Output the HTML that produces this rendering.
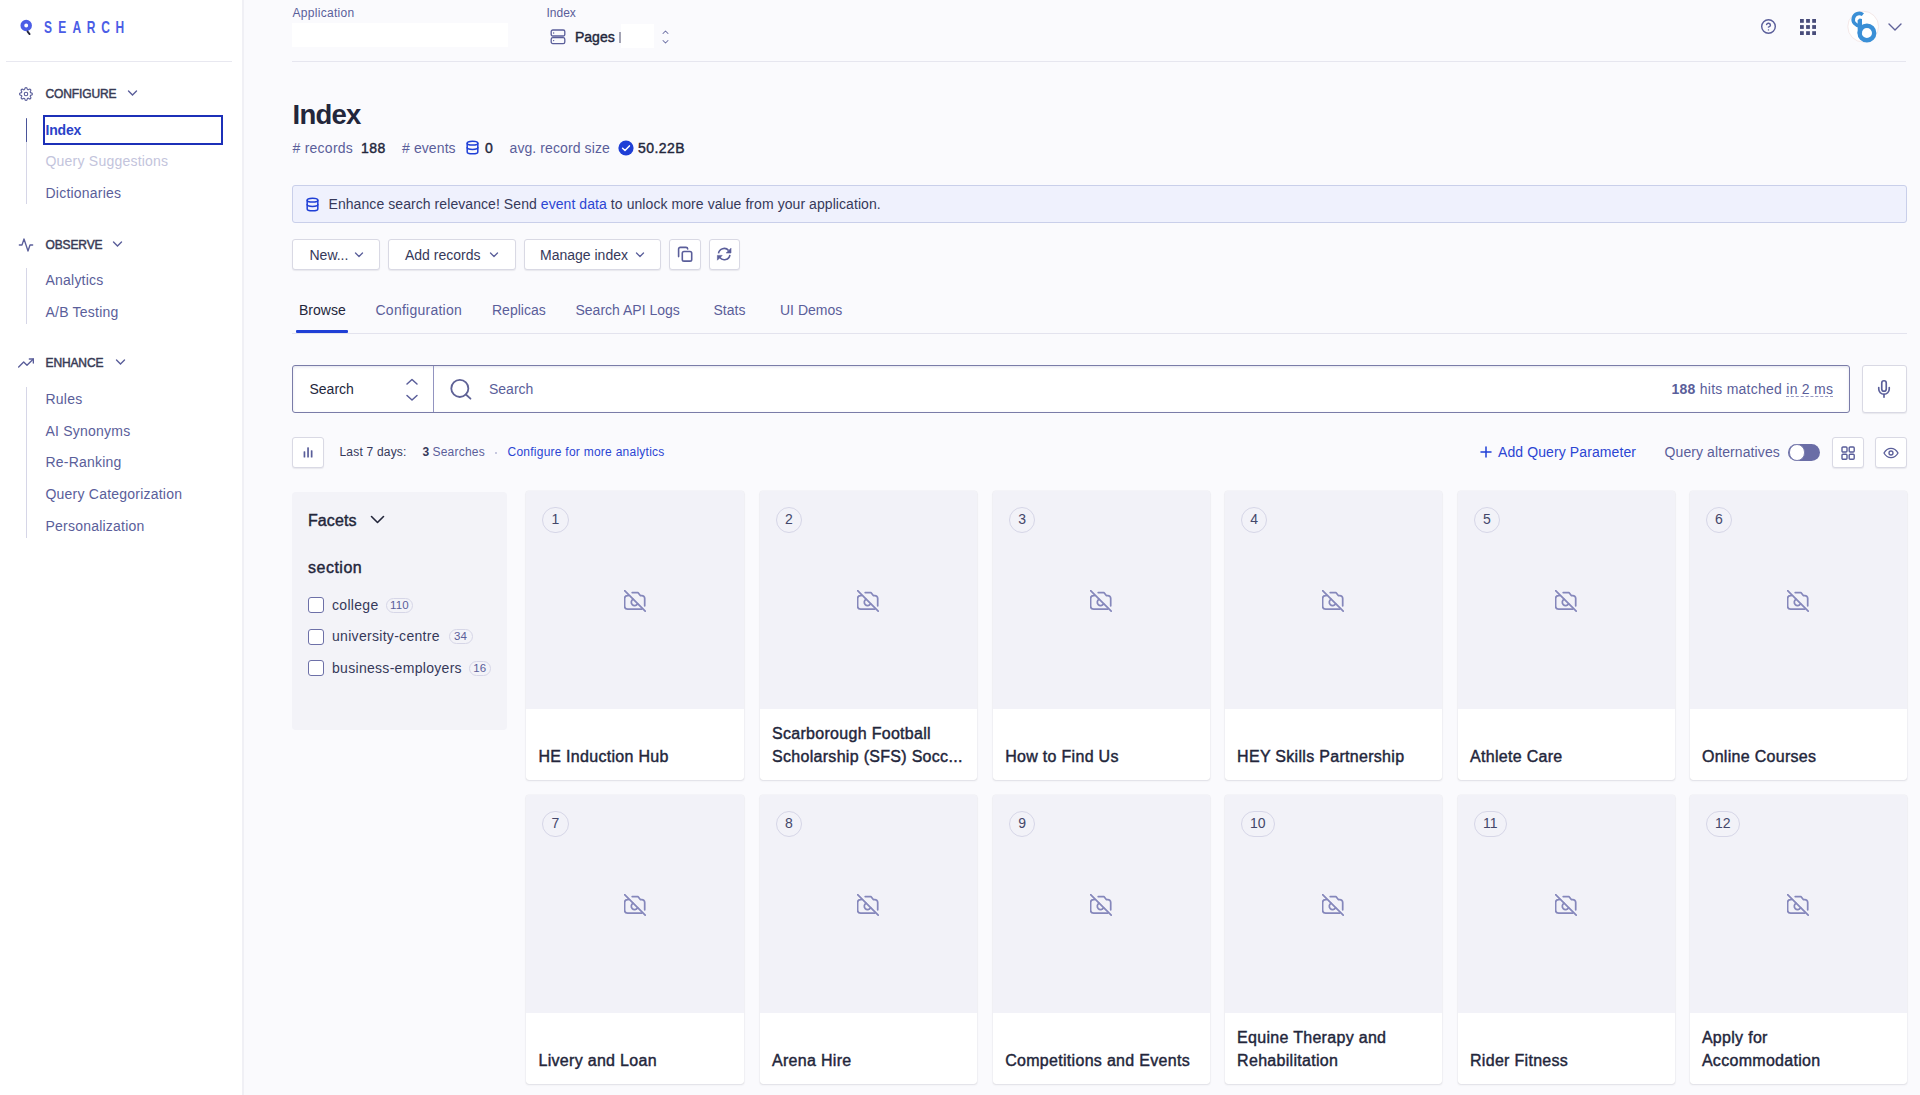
<!DOCTYPE html>
<html><head><meta charset="utf-8">
<style>
*{box-sizing:border-box;margin:0;padding:0}
html,body{width:1920px;height:1095px;overflow:hidden}
body{font-family:"Liberation Sans",sans-serif;background:#fafafd;color:#23263b;position:relative;font-size:14px}
.abs{position:absolute}
svg{display:block}
.t{position:absolute;white-space:nowrap;line-height:1}
/* sidebar */
#side{position:absolute;left:0;top:0;width:244px;height:1095px;background:#fff;border-right:2px solid #f0f0f5}
.sec{position:absolute;left:45.5px;margin-top:-1px;font-size:12px;color:#383b55;letter-spacing:-0.12px;-webkit-text-stroke:0.45px #383b55}
.nav{position:absolute;left:45.5px;font-size:14px;color:#5a5e9a;white-space:nowrap;line-height:1;letter-spacing:0.22px;margin-top:-1.3px}
.vline{position:absolute;left:26px;width:1px;background:#d6d6e7}
/* main */
.lbl{color:#5a5e9a}
.btn{position:absolute;top:239.3px;height:30.4px;background:#fff;border:1px solid #d9d9e4;border-radius:3px;box-shadow:0 1px 1px rgba(35,38,59,.08)}
.btn span{position:absolute;top:7.6px;font-size:14px;color:#36395a;line-height:1;white-space:nowrap}
.tab{position:absolute;top:303px;font-size:14px;color:#5a5e9a;line-height:1;white-space:nowrap}
.card{position:absolute;width:217.6px;height:289px;background:#fff;border-radius:3px;box-shadow:0 0 1px rgba(35,38,59,.22),0 1px 2px rgba(35,38,59,.10);overflow:hidden}
.card .img{position:absolute;left:0;top:0;right:0;height:217.5px;background:#f2f2f8}
.card .num{position:absolute;left:16.2px;top:16.3px;height:25.5px;min-width:26.3px;padding:0 8.2px;border:1px solid #d6d6e7;border-radius:13px;font-size:14px;color:#44476a;line-height:23px;text-align:center}
.card .cam{position:absolute;left:97.6px;top:99px}
.card .ttl{position:absolute;left:12.4px;right:8px;bottom:11.5px;font-size:16px;color:#23263b;line-height:23.5px;letter-spacing:0.3px;-webkit-text-stroke:0.42px #23263b}
.fct{position:absolute;left:332px;font-size:14px;color:#36395a;line-height:1;white-space:nowrap;letter-spacing:0.3px;margin-top:-0.6px}
.cb{position:absolute;left:308px;width:16px;height:16px;border:1px solid #6d70a8;border-radius:3px;background:#fff}
.badge{position:absolute;height:15px;border:1px solid #d6d6e7;border-radius:8px;font-size:11.5px;color:#5a5e9a;line-height:13px;text-align:center;letter-spacing:0.2px}
.ibtn{position:absolute;background:#fff;border:1px solid #d9d9e4;border-radius:3px;box-shadow:0 1px 1px rgba(35,38,59,.08)}
</style></head><body>

<!-- SIDEBAR -->
<div id="side">
  <!-- logo -->
  <svg class="abs" style="left:19px;top:19px" width="16" height="17" viewBox="0 0 16 17">
    <circle cx="7.2" cy="6.5" r="3.85" fill="none" stroke="#4b5de6" stroke-width="3.8"/>
    <path d="M8.6 12.6 L10.6 15.1" stroke="#23263b" stroke-width="1.9" stroke-linecap="round"/>
  </svg>
  <svg class="abs" style="left:40px;top:16px" width="100" height="22" viewBox="0 0 100 22">
    <g transform="scale(0.74,1)" fill="#4b5de6" font-family="Liberation Sans" font-weight="bold" font-size="16.2">
      <text x="5.4" y="17.2">S</text>
      <text x="24.6" y="17.2">E</text>
      <text x="43.8" y="17.2">A</text>
      <text x="63.2" y="17.2">R</text>
      <text x="82.8" y="17.2">C</text>
      <text x="102" y="17.2">H</text>
    </g>
  </svg>
  <div class="abs" style="left:6px;top:61px;width:226px;height:1px;background:#e8e8f0"></div>

  <!-- CONFIGURE -->
  <svg class="abs" style="left:19px;top:87px" width="14" height="14" viewBox="0 0 24 24" fill="none" stroke="#5a5e9a" stroke-width="1.9" stroke-linecap="round" stroke-linejoin="round"><circle cx="12" cy="12" r="3"/><path d="M19.4 15a1.65 1.65 0 0 0 .33 1.82l.06.06a2 2 0 0 1 0 2.83 2 2 0 0 1-2.83 0l-.06-.06a1.65 1.65 0 0 0-1.82-.33 1.65 1.65 0 0 0-1 1.51V21a2 2 0 0 1-2 2 2 2 0 0 1-2-2v-.09A1.65 1.65 0 0 0 9 19.4a1.65 1.65 0 0 0-1.82.33l-.06.06a2 2 0 0 1-2.83 0 2 2 0 0 1 0-2.830l.06-.06a1.65 1.65 0 0 0 .33-1.82 1.65 1.65 0 0 0-1.51-1H3a2 2 0 0 1-2-2 2 2 0 0 1 2-2h.09A1.65 1.65 0 0 0 4.6 9a1.65 1.65 0 0 0-.33-1.82l-.06-.06a2 2 0 0 1 0-2.83 2 2 0 0 1 2.83 0l.06.06a1.650 1.65 0 0 0 1.82.33H9a1.65 1.65 0 0 0 1-1.51V3a2 2 0 0 1 2-2 2 2 0 0 1 2 2v.09a1.65 1.65 0 0 0 1 1.51 1.65 1.65 0 0 0 1.82-.33l.06-.06a2 2 0 0 1 2.83 0 2 2 0 0 1 0 2.83l-.06.06a1.65 1.65 0 0 0-.33 1.82V9a1.65 1.65 0 0 0 1.51 1H21a2 2 0 0 1 2 2 2 2 0 0 1-2 2h-.09a1.65 1.65 0 0 0-1.51 1z"/></svg>
  <div class="t sec" style="top:88.5px">CONFIGURE</div>
  <svg class="abs" style="left:127px;top:89px" width="11" height="8" viewBox="0 0 11 8"><path d="M1.5 2 L5.5 6 L9.5 2" fill="none" stroke="#5a5e9a" stroke-width="1.4" stroke-linecap="round"/></svg>
  <div class="vline" style="top:118px;height:86px"></div>
  <div class="abs" style="left:26px;top:118px;width:1.4px;height:24px;background:#4a5499;border-radius:1px"></div>
  <div class="abs" style="left:43px;top:115px;width:180px;height:30px;border:2px solid #1c30b8"></div>
  <div class="nav" style="top:124.5px;color:#2a42c8;font-weight:bold;letter-spacing:-0.2px">Index</div>
  <div class="nav" style="top:155.5px;color:#c3c4dc">Query Suggestions</div>
  <div class="nav" style="top:187px">Dictionaries</div>

  <!-- OBSERVE -->
  <svg class="abs" style="left:18px;top:237px" width="16" height="16" viewBox="0 0 24 24" fill="none" stroke="#5a5e9a" stroke-width="2" stroke-linecap="round" stroke-linejoin="round"><polyline points="22 12 18 12 15 21 9 3 6 12 2 12"/></svg>
  <div class="t sec" style="top:239.5px">OBSERVE</div>
  <svg class="abs" style="left:112px;top:240px" width="11" height="8" viewBox="0 0 11 8"><path d="M1.5 2 L5.5 6 L9.5 2" fill="none" stroke="#5a5e9a" stroke-width="1.4" stroke-linecap="round"/></svg>
  <div class="vline" style="top:268px;height:56px"></div>
  <div class="nav" style="top:274px">Analytics</div>
  <div class="nav" style="top:306px">A/B Testing</div>

  <!-- ENHANCE -->
  <svg class="abs" style="left:18px;top:355px" width="16" height="16" viewBox="0 0 24 24" fill="none" stroke="#5a5e9a" stroke-width="2" stroke-linecap="round" stroke-linejoin="round"><polyline points="23 6 13.5 15.5 8.5 10.5 1 18"/><polyline points="17 6 23 6 23 12"/></svg>
  <div class="t sec" style="top:357.5px">ENHANCE</div>
  <svg class="abs" style="left:115px;top:358px" width="11" height="8" viewBox="0 0 11 8"><path d="M1.5 2 L5.5 6 L9.5 2" fill="none" stroke="#5a5e9a" stroke-width="1.4" stroke-linecap="round"/></svg>
  <div class="vline" style="top:387px;height:151px"></div>
  <div class="nav" style="top:393px">Rules</div>
  <div class="nav" style="top:425px">AI Synonyms</div>
  <div class="nav" style="top:456px">Re-Ranking</div>
  <div class="nav" style="top:488px">Query Categorization</div>
  <div class="nav" style="top:520px">Personalization</div>
</div>

<!-- MAIN -->
<!-- TOPBAR -->
<div class="t lbl" style="left:292.5px;top:7px;font-size:12px;letter-spacing:0.3px">Application</div>
<div class="abs" style="left:292px;top:23px;width:215.5px;height:24px;background:#fff"></div>
<div class="t lbl" style="left:546.5px;top:7px;font-size:12px">Index</div>
<svg class="abs" style="left:550px;top:29px" width="16" height="16" viewBox="0 0 16 16" fill="none" stroke="#5a5e9a" stroke-width="1.3"><rect x="1.2" y="1" width="13.6" height="6" rx="1.6"/><rect x="1.2" y="8.6" width="13.6" height="6" rx="1.6"/><path d="M3.6 4h.1M3.6 11.6h.1" stroke-linecap="round"/></svg>
<div class="t" style="left:575px;top:30px;font-size:14px;color:#23263b;letter-spacing:0px;-webkit-text-stroke:0.4px #23263b">Pages</div>
<div class="abs" style="left:619.3px;top:32px;width:1.6px;height:10.5px;background:#a3a3b3"></div>
<div class="abs" style="left:620.5px;top:24px;width:33px;height:23.5px;background:#fff"></div>
<svg class="abs" style="left:660px;top:29px" width="11" height="16" viewBox="0 0 11 16" fill="none" stroke="#6f72a6" stroke-width="1.05" stroke-linecap="round" stroke-linejoin="round"><path d="M3 4.5 L5.5 2 L8 4.5"/><path d="M3 11.5 L5.5 14 L8 11.5"/></svg>
<div class="abs" style="left:292px;top:61px;width:1614px;height:1px;background:#e6e6ef"></div>

<!-- right icons -->
<svg class="abs" style="left:1760px;top:18px" width="17" height="17" viewBox="0 0 24 24" fill="none" stroke="#5a5e9a" stroke-width="2" stroke-linecap="round" stroke-linejoin="round"><circle cx="12" cy="12" r="9.6"/><path d="M9.3 9.2a2.8 2.8 0 0 1 5.4.9c0 1.9-2.8 2.7-2.8 2.7"/><path d="M12 16.8h.01"/></svg>
<svg class="abs" style="left:1800px;top:18.5px" width="16" height="16" viewBox="0 0 16 16" fill="#484c7a"><rect x="0" y="0" width="3.8" height="3.8"/><rect x="6.1" y="0" width="3.8" height="3.8"/><rect x="12.2" y="0" width="3.8" height="3.8"/><rect x="0" y="6.1" width="3.8" height="3.8"/><rect x="6.1" y="6.1" width="3.8" height="3.8"/><rect x="12.2" y="6.1" width="3.8" height="3.8"/><rect x="0" y="12.2" width="3.8" height="3.8"/><rect x="6.1" y="12.2" width="3.8" height="3.8"/><rect x="12.2" y="12.2" width="3.8" height="3.8"/></svg>
<svg class="abs" style="left:1846px;top:9px" width="36" height="36" viewBox="0 0 36 36">
  <circle cx="17.2" cy="17.6" r="15.4" fill="#fff" stroke="#efdede" stroke-width="0.7"/>
  <path d="M16.9 5.6 A6.1 6.1 0 1 0 13.9 16.6" fill="none" stroke="#3a8fd6" stroke-width="3.6"/>
  <path d="M11.6 11.2 L13.6 9.6 L16 10 L16.1 24.5 L11.7 24.5 Z" fill="#3a8fd6"/>
  <circle cx="20.9" cy="24" r="7.3" fill="none" stroke="#3a8fd6" stroke-width="4.4"/>
</svg>
<svg class="abs" style="left:1887px;top:21px" width="16" height="12" viewBox="0 0 16 12"><path d="M2 3 L8 9 L14 3" fill="none" stroke="#5f6299" stroke-width="1.4" stroke-linecap="round" stroke-linejoin="round"/></svg>

<!-- TITLE -->
<div class="t" style="left:292.5px;top:101.2px;font-size:27.5px;font-weight:bold;color:#23263b;letter-spacing:-0.75px">Index</div>
<div class="t lbl" style="left:292.5px;top:140.7px;letter-spacing:0.25px">#&nbsp;records</div>
<div class="t" style="left:361px;top:140.7px;color:#23263b;letter-spacing:0.5px;-webkit-text-stroke:0.4px #23263b">188</div>
<div class="t lbl" style="left:402px;top:140.7px;letter-spacing:0.1px">#&nbsp;events</div>
<svg class="abs" style="left:464.5px;top:139.5px" width="15" height="15" viewBox="0 0 24 24" fill="none" stroke="#1f3fd6" stroke-width="2.4" stroke-linecap="round" stroke-linejoin="round"><ellipse cx="12" cy="5" rx="8.5" ry="3"/><path d="M20.5 12c0 1.66-3.8 3-8.5 3s-8.5-1.34-8.5-3"/><path d="M3.5 5v14c0 1.66 3.8 3 8.5 3s8.5-1.34 8.5-3V5"/></svg>
<div class="t" style="left:485px;top:140.7px;color:#23263b;-webkit-text-stroke:0.4px #23263b">0</div>
<div class="t lbl" style="left:509.5px;top:140.7px;letter-spacing:0.1px">avg. record size</div>
<svg class="abs" style="left:617.5px;top:139.5px" width="16" height="16" viewBox="0 0 16 16"><circle cx="8" cy="8" r="7.6" fill="#1f3fd6"/><path d="M4.6 8.2 L7 10.5 L11.4 5.9" fill="none" stroke="#fff" stroke-width="1.5" stroke-linecap="round" stroke-linejoin="round"/></svg>
<div class="t" style="left:638px;top:140.7px;color:#23263b;letter-spacing:0.45px;-webkit-text-stroke:0.4px #23263b">50.22B</div>

<!-- BANNER -->
<div class="abs" style="left:292px;top:185px;width:1615px;height:37.5px;background:#eff1fd;border:1px solid #c9cfea;border-radius:3px"></div>
<svg class="abs" style="left:305px;top:196.5px" width="15" height="15" viewBox="0 0 24 24" fill="none" stroke="#1f3fd6" stroke-width="2.4" stroke-linecap="round" stroke-linejoin="round"><ellipse cx="12" cy="5" rx="8.5" ry="3"/><path d="M20.5 12c0 1.66-3.8 3-8.5 3s-8.5-1.34-8.5-3"/><path d="M3.5 5v14c0 1.66 3.8 3 8.5 3s8.5-1.34 8.5-3V5"/></svg>
<div class="t" style="left:328.5px;top:197.2px;color:#36395a;letter-spacing:0.07px">Enhance search relevance! Send <span style="color:#2b45d3">event data</span> to unlock more value from your application.</div>

<!-- BUTTONS -->
<div class="btn" style="left:292px;width:87.5px"><span style="left:16.5px">New...</span></div>
<svg class="abs" style="left:354px;top:251px" width="10" height="8" viewBox="0 0 10 8"><path d="M1.5 2 L5 5.5 L8.5 2" fill="none" stroke="#5a5e9a" stroke-width="1.3" stroke-linecap="round" stroke-linejoin="round"/></svg>
<div class="btn" style="left:388px;width:127.5px"><span style="left:16px">Add records</span></div>
<svg class="abs" style="left:489px;top:251px" width="10" height="8" viewBox="0 0 10 8"><path d="M1.5 2 L5 5.5 L8.5 2" fill="none" stroke="#5a5e9a" stroke-width="1.3" stroke-linecap="round" stroke-linejoin="round"/></svg>
<div class="btn" style="left:524px;width:136.5px"><span style="left:15px">Manage index</span></div>
<svg class="abs" style="left:634.5px;top:251px" width="10" height="8" viewBox="0 0 10 8"><path d="M1.5 2 L5 5.5 L8.5 2" fill="none" stroke="#5a5e9a" stroke-width="1.3" stroke-linecap="round" stroke-linejoin="round"/></svg>
<div class="btn" style="left:669px;width:32px"></div>
<svg class="abs" style="left:675px;top:244px" width="20" height="20" viewBox="0 0 20 20" fill="none" stroke="#5a5e9a" stroke-width="1.6" stroke-linejoin="round" stroke-linecap="round"><rect x="7.3" y="7.5" width="9.4" height="9.6" rx="1.7"/><path d="M3.6 12.6V5.1A1.7 1.7 0 0 1 5.3 3.4H11a1.7 1.7 0 0 1 1.7 1.6"/></svg>
<div class="btn" style="left:709px;width:31px"></div>
<svg class="abs" style="left:716px;top:246px" width="16" height="16" viewBox="0 0 16 16" fill="none" stroke="#5a5e9a" stroke-width="1.6"><path d="M2.5 7.4A5.7 5.7 0 0 1 12.6 4.6"/><path d="M13.9 8.8A5.7 5.7 0 0 1 3.8 11.6"/><path d="M15 2.2V7H10.2Z" fill="#5a5e9a" stroke-width="0.6" stroke-linejoin="round"/><path d="M1.4 14.2V9.4H6.2Z" fill="#5a5e9a" stroke-width="0.6" stroke-linejoin="round"/></svg>

<!-- TABS -->
<div class="tab" style="left:299px;color:#23263b">Browse</div>
<div class="tab" style="left:375.5px;letter-spacing:0.25px">Configuration</div>
<div class="tab" style="left:492px">Replicas</div>
<div class="tab" style="left:575.5px">Search API Logs</div>
<div class="tab" style="left:713.5px">Stats</div>
<div class="tab" style="left:780px">UI Demos</div>
<div class="abs" style="left:292px;top:332.5px;width:1615px;height:1px;background:#e3e3ee"></div>
<div class="abs" style="left:296px;top:329.5px;width:52px;height:3.5px;background:#1f3fd6;border-radius:1px"></div>

<!-- SEARCH BAR -->
<div class="abs" style="left:292px;top:365px;width:1558px;height:47.5px;background:#fff;border:1px solid #7a7ca8;border-radius:3px;box-shadow:inset 0 1px 3px rgba(119,122,175,.22)"></div>
<div class="abs" style="left:432.6px;top:366px;width:1.6px;height:45.5px;background:#9294c0"></div>
<div class="t" style="left:309.5px;top:382.2px;color:#23263b">Search</div>
<svg class="abs" style="left:404px;top:377px" width="16" height="26" viewBox="0 0 16 26" fill="none" stroke="#5a5e9a" stroke-width="1.5" stroke-linecap="round" stroke-linejoin="round"><path d="M3 7 L8 2.5 L13 7"/><path d="M3 18.5 L8 23 L13 18.5"/></svg>
<svg class="abs" style="left:449px;top:378px" width="23" height="23" viewBox="0 0 24 24" fill="none" stroke="#5f6296" stroke-width="1.9" stroke-linecap="round" stroke-linejoin="round"><circle cx="11.3" cy="10.9" r="8.9"/><line x1="22.4" y1="21.6" x2="17.6" y2="17.2"/></svg>
<div class="t lbl" style="left:489px;top:382.2px">Search</div>
<div class="t lbl" style="left:1671.5px;top:381.4px;letter-spacing:0.25px;line-height:1.15"><b>188</b> hits matched <span style="text-decoration:underline dashed #9698c3;text-underline-offset:1.5px;text-decoration-thickness:1px">in 2 ms</span></div>
<div class="ibtn" style="left:1862px;top:365px;width:45px;height:47.5px"></div>
<svg class="abs" style="left:1875px;top:379px" width="18" height="20" viewBox="0 0 24 24" fill="none" stroke="#5a5e9a" stroke-width="2.2" stroke-linecap="round" stroke-linejoin="round"><path d="M12 1a3 3 0 0 0-3 3v8a3 3 0 0 0 6 0V4a3 3 0 0 0-3-3z"/><path d="M19 10v2a7 7 0 0 1-14 0v-2"/><line x1="12" y1="19" x2="12" y2="23"/></svg>

<!-- ANALYTICS ROW -->
<div class="ibtn" style="left:292px;top:437px;width:31.5px;height:30.5px"></div>
<svg class="abs" style="left:300px;top:444px" width="16" height="16" viewBox="0 0 16 16" fill="#5a5e9a"><rect x="3.6" y="7.2" width="1.7" height="6.3" rx=".6"/><rect x="7.2" y="3.2" width="1.7" height="10.3" rx=".6"/><rect x="10.8" y="6.2" width="1.7" height="7.3" rx=".6"/></svg>
<div class="t" style="left:339.5px;top:446px;font-size:12px;color:#36395a;letter-spacing:0.2px">Last 7 days:</div>
<div class="t" style="left:422.5px;top:446px;font-size:12px;color:#36395a"><b>3</b> <span style="color:#5a5e9a;letter-spacing:0.2px">Searches</span></div>
<div class="abs" style="left:495px;top:451.5px;width:2.2px;height:2.2px;border-radius:50%;background:#b6b7d5"></div>
<div class="t" style="left:507.5px;top:446px;font-size:12px;color:#2b45d3;letter-spacing:0.25px">Configure for more analytics</div>

<svg class="abs" style="left:1479px;top:444.5px" width="14" height="14" viewBox="0 0 14 14"><path d="M7 2v10M2 7h10" stroke="#1f3fd6" stroke-width="1.5" stroke-linecap="round"/></svg>
<div class="t" style="left:1498px;top:445px;color:#2b45d3;letter-spacing:0.1px">Add Query Parameter</div>
<div class="t lbl" style="left:1664.5px;top:445px;letter-spacing:0.1px">Query alternatives</div>
<div class="abs" style="left:1788px;top:443.5px;width:32px;height:17.5px;border-radius:9px;background:#6a6da6"></div>
<div class="abs" style="left:1788.5px;top:444px;width:16.5px;height:16.5px;border-radius:50%;background:#fff;border:1px solid #7d80b0"></div>
<div class="ibtn" style="left:1832px;top:437px;width:31.5px;height:30.5px"></div>
<svg class="abs" style="left:1840px;top:444.5px" width="16" height="16" viewBox="0 0 16 16" fill="none" stroke="#5a5e9a" stroke-width="1.4"><rect x="2" y="2" width="5" height="5" rx="1"/><rect x="9.2" y="2" width="5" height="5" rx="1"/><rect x="2" y="9.2" width="5" height="5" rx="1"/><rect x="9.2" y="9.2" width="5" height="5" rx="1"/></svg>
<div class="ibtn" style="left:1875px;top:437px;width:31.5px;height:30.5px"></div>
<svg class="abs" style="left:1882.5px;top:444.5px" width="16" height="16" viewBox="0 0 24 24" fill="none" stroke="#5a5e9a" stroke-width="2" stroke-linecap="round" stroke-linejoin="round"><path d="M1.5 12S5.5 5 12 5s10.5 7 10.5 7-4 7-10.5 7S1.5 12 1.5 12z"/><circle cx="12" cy="12" r="3"/></svg>

<!-- FACETS -->
<div class="abs" style="left:292px;top:491.5px;width:214.5px;height:238px;background:#f3f3f8;border-radius:4px"></div>
<div class="t" style="left:308px;top:512.5px;font-size:16px;color:#23263b;letter-spacing:0.1px;-webkit-text-stroke:0.42px #23263b">Facets</div>
<svg class="abs" style="left:368.5px;top:513px" width="17" height="13" viewBox="0 0 17 13"><path d="M2.5 3.5 L8.5 9.5 L14.5 3.5" fill="none" stroke="#23263b" stroke-width="1.6" stroke-linecap="round" stroke-linejoin="round"/></svg>
<div class="t" style="left:308px;top:559.5px;font-size:16px;color:#23263b;letter-spacing:0.5px;-webkit-text-stroke:0.42px #23263b">section</div>
<div class="cb" style="top:597px"></div>
<div class="fct" style="top:598.5px">college</div>
<div class="badge" style="left:386px;top:597.5px;width:27px">110</div>
<div class="cb" style="top:628.5px"></div>
<div class="fct" style="top:630px">university-centre</div>
<div class="badge" style="left:448.5px;top:629px;width:24px">34</div>
<div class="cb" style="top:660px"></div>
<div class="fct" style="top:661.5px">business-employers</div>
<div class="badge" style="left:468.5px;top:660.5px;width:22.5px">16</div>

<div class="card" style="left:526.1px;top:491px"><div class="img"></div><div class="num">1</div><svg class="cam" width="22" height="22" viewBox="0 0 22 22" fill="none" stroke="#8587bb" stroke-width="1.75" stroke-linecap="round" stroke-linejoin="round"><path d="M0.6 0.6 L21.2 21.2"/><path d="M4.3 5.6 H3.6 A3 3 0 0 0 0.6 8.6 V16.2 A3 3 0 0 0 3.6 19.2 H17.6"/><path d="M8.2 2.5 H13.9 L16.3 5.5 H17.8 A2.9 2.9 0 0 1 20.7 8.4 V15.8"/><path d="M9.1 9.3 A3.3 3.3 0 1 0 13.5 13.8"/></svg><div class="ttl">HE Induction Hub</div></div>
<div class="card" style="left:759.6px;top:491px"><div class="img"></div><div class="num">2</div><svg class="cam" width="22" height="22" viewBox="0 0 22 22" fill="none" stroke="#8587bb" stroke-width="1.75" stroke-linecap="round" stroke-linejoin="round"><path d="M0.6 0.6 L21.2 21.2"/><path d="M4.3 5.6 H3.6 A3 3 0 0 0 0.6 8.6 V16.2 A3 3 0 0 0 3.6 19.2 H17.6"/><path d="M8.2 2.5 H13.9 L16.3 5.5 H17.8 A2.9 2.9 0 0 1 20.7 8.4 V15.8"/><path d="M9.1 9.3 A3.3 3.3 0 1 0 13.5 13.8"/></svg><div class="ttl">Scarborough Football<br>Scholarship (SFS) Socc...</div></div>
<div class="card" style="left:992.8px;top:491px"><div class="img"></div><div class="num">3</div><svg class="cam" width="22" height="22" viewBox="0 0 22 22" fill="none" stroke="#8587bb" stroke-width="1.75" stroke-linecap="round" stroke-linejoin="round"><path d="M0.6 0.6 L21.2 21.2"/><path d="M4.3 5.6 H3.6 A3 3 0 0 0 0.6 8.6 V16.2 A3 3 0 0 0 3.6 19.2 H17.6"/><path d="M8.2 2.5 H13.9 L16.3 5.5 H17.8 A2.9 2.9 0 0 1 20.7 8.4 V15.8"/><path d="M9.1 9.3 A3.3 3.3 0 1 0 13.5 13.8"/></svg><div class="ttl">How to Find Us</div></div>
<div class="card" style="left:1224.7px;top:491px"><div class="img"></div><div class="num">4</div><svg class="cam" width="22" height="22" viewBox="0 0 22 22" fill="none" stroke="#8587bb" stroke-width="1.75" stroke-linecap="round" stroke-linejoin="round"><path d="M0.6 0.6 L21.2 21.2"/><path d="M4.3 5.6 H3.6 A3 3 0 0 0 0.6 8.6 V16.2 A3 3 0 0 0 3.6 19.2 H17.6"/><path d="M8.2 2.5 H13.9 L16.3 5.5 H17.8 A2.9 2.9 0 0 1 20.7 8.4 V15.8"/><path d="M9.1 9.3 A3.3 3.3 0 1 0 13.5 13.8"/></svg><div class="ttl">HEY Skills Partnership</div></div>
<div class="card" style="left:1457.6px;top:491px"><div class="img"></div><div class="num">5</div><svg class="cam" width="22" height="22" viewBox="0 0 22 22" fill="none" stroke="#8587bb" stroke-width="1.75" stroke-linecap="round" stroke-linejoin="round"><path d="M0.6 0.6 L21.2 21.2"/><path d="M4.3 5.6 H3.6 A3 3 0 0 0 0.6 8.6 V16.2 A3 3 0 0 0 3.6 19.2 H17.6"/><path d="M8.2 2.5 H13.9 L16.3 5.5 H17.8 A2.9 2.9 0 0 1 20.7 8.4 V15.8"/><path d="M9.1 9.3 A3.3 3.3 0 1 0 13.5 13.8"/></svg><div class="ttl">Athlete Care</div></div>
<div class="card" style="left:1689.5px;top:491px"><div class="img"></div><div class="num">6</div><svg class="cam" width="22" height="22" viewBox="0 0 22 22" fill="none" stroke="#8587bb" stroke-width="1.75" stroke-linecap="round" stroke-linejoin="round"><path d="M0.6 0.6 L21.2 21.2"/><path d="M4.3 5.6 H3.6 A3 3 0 0 0 0.6 8.6 V16.2 A3 3 0 0 0 3.6 19.2 H17.6"/><path d="M8.2 2.5 H13.9 L16.3 5.5 H17.8 A2.9 2.9 0 0 1 20.7 8.4 V15.8"/><path d="M9.1 9.3 A3.3 3.3 0 1 0 13.5 13.8"/></svg><div class="ttl">Online Courses</div></div>
<div class="card" style="left:526.1px;top:795.2px"><div class="img"></div><div class="num">7</div><svg class="cam" width="22" height="22" viewBox="0 0 22 22" fill="none" stroke="#8587bb" stroke-width="1.75" stroke-linecap="round" stroke-linejoin="round"><path d="M0.6 0.6 L21.2 21.2"/><path d="M4.3 5.6 H3.6 A3 3 0 0 0 0.6 8.6 V16.2 A3 3 0 0 0 3.6 19.2 H17.6"/><path d="M8.2 2.5 H13.9 L16.3 5.5 H17.8 A2.9 2.9 0 0 1 20.7 8.4 V15.8"/><path d="M9.1 9.3 A3.3 3.3 0 1 0 13.5 13.8"/></svg><div class="ttl">Livery and Loan</div></div>
<div class="card" style="left:759.6px;top:795.2px"><div class="img"></div><div class="num">8</div><svg class="cam" width="22" height="22" viewBox="0 0 22 22" fill="none" stroke="#8587bb" stroke-width="1.75" stroke-linecap="round" stroke-linejoin="round"><path d="M0.6 0.6 L21.2 21.2"/><path d="M4.3 5.6 H3.6 A3 3 0 0 0 0.6 8.6 V16.2 A3 3 0 0 0 3.6 19.2 H17.6"/><path d="M8.2 2.5 H13.9 L16.3 5.5 H17.8 A2.9 2.9 0 0 1 20.7 8.4 V15.8"/><path d="M9.1 9.3 A3.3 3.3 0 1 0 13.5 13.8"/></svg><div class="ttl">Arena Hire</div></div>
<div class="card" style="left:992.8px;top:795.2px"><div class="img"></div><div class="num">9</div><svg class="cam" width="22" height="22" viewBox="0 0 22 22" fill="none" stroke="#8587bb" stroke-width="1.75" stroke-linecap="round" stroke-linejoin="round"><path d="M0.6 0.6 L21.2 21.2"/><path d="M4.3 5.6 H3.6 A3 3 0 0 0 0.6 8.6 V16.2 A3 3 0 0 0 3.6 19.2 H17.6"/><path d="M8.2 2.5 H13.9 L16.3 5.5 H17.8 A2.9 2.9 0 0 1 20.7 8.4 V15.8"/><path d="M9.1 9.3 A3.3 3.3 0 1 0 13.5 13.8"/></svg><div class="ttl">Competitions and Events</div></div>
<div class="card" style="left:1224.7px;top:795.2px"><div class="img"></div><div class="num">10</div><svg class="cam" width="22" height="22" viewBox="0 0 22 22" fill="none" stroke="#8587bb" stroke-width="1.75" stroke-linecap="round" stroke-linejoin="round"><path d="M0.6 0.6 L21.2 21.2"/><path d="M4.3 5.6 H3.6 A3 3 0 0 0 0.6 8.6 V16.2 A3 3 0 0 0 3.6 19.2 H17.6"/><path d="M8.2 2.5 H13.9 L16.3 5.5 H17.8 A2.9 2.9 0 0 1 20.7 8.4 V15.8"/><path d="M9.1 9.3 A3.3 3.3 0 1 0 13.5 13.8"/></svg><div class="ttl">Equine Therapy and<br>Rehabilitation</div></div>
<div class="card" style="left:1457.6px;top:795.2px"><div class="img"></div><div class="num">11</div><svg class="cam" width="22" height="22" viewBox="0 0 22 22" fill="none" stroke="#8587bb" stroke-width="1.75" stroke-linecap="round" stroke-linejoin="round"><path d="M0.6 0.6 L21.2 21.2"/><path d="M4.3 5.6 H3.6 A3 3 0 0 0 0.6 8.6 V16.2 A3 3 0 0 0 3.6 19.2 H17.6"/><path d="M8.2 2.5 H13.9 L16.3 5.5 H17.8 A2.9 2.9 0 0 1 20.7 8.4 V15.8"/><path d="M9.1 9.3 A3.3 3.3 0 1 0 13.5 13.8"/></svg><div class="ttl">Rider Fitness</div></div>
<div class="card" style="left:1689.5px;top:795.2px"><div class="img"></div><div class="num">12</div><svg class="cam" width="22" height="22" viewBox="0 0 22 22" fill="none" stroke="#8587bb" stroke-width="1.75" stroke-linecap="round" stroke-linejoin="round"><path d="M0.6 0.6 L21.2 21.2"/><path d="M4.3 5.6 H3.6 A3 3 0 0 0 0.6 8.6 V16.2 A3 3 0 0 0 3.6 19.2 H17.6"/><path d="M8.2 2.5 H13.9 L16.3 5.5 H17.8 A2.9 2.9 0 0 1 20.7 8.4 V15.8"/><path d="M9.1 9.3 A3.3 3.3 0 1 0 13.5 13.8"/></svg><div class="ttl">Apply for<br>Accommodation</div></div>

</body></html>
